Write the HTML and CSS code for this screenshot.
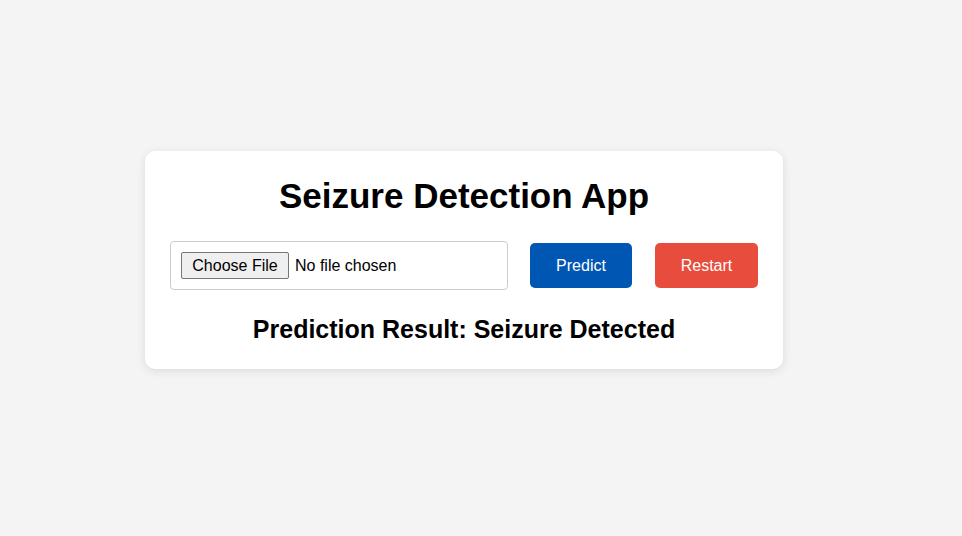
FILE: index.html
```html
<!DOCTYPE html>
<html lang="en">
<head>
<meta charset="utf-8">
<title>Seizure Detection App</title>
<link rel="stylesheet" href="styles.css">
</head>
<body>
  <main class="card">
    <h1 class="title">Seizure Detection App</h1>
    <div class="controls">
      <input class="file-input" type="file">
      <button class="btn btn-predict" type="button">Predict</button>
      <button class="btn btn-restart" type="button">Restart</button>
    </div>
    <h2 class="result">Prediction Result: Seizure Detected</h2>
  </main>
</body>
</html>
```

FILE: styles.css
```css
* {
  box-sizing: border-box;
}

html, body {
  margin: 0;
  height: 100%;
}

body {
  background: #f4f4f4;
  font-family: "Liberation Sans", Arial, sans-serif;
  color: #000;
  display: flex;
  align-items: center;
  justify-content: center;
  padding: 0 34px 16px 0;
}

.card {
  width: 638px;
  background: #fff;
  border-radius: 10px;
  box-shadow: 0 2px 10px rgba(0, 0, 0, 0.1);
  padding: 25px 25px 26px;
  text-align: center;
}

.title {
  margin: 0;
  font-size: 35px;
  font-weight: bold;
  line-height: 39px;
}

.controls {
  display: flex;
  align-items: center;
  gap: 22px;
  margin-top: 26px;
}

.file-input {
  width: 338px;
  height: 49px;
  padding: 10px;
  border: 1px solid #ccc;
  border-radius: 4px;
  font-family: "Liberation Sans", Arial, sans-serif;
  font-size: 16px;
  background: #fff;
  text-align: left;
}

.file-input::file-selector-button {
  font-family: "Liberation Sans", Arial, sans-serif;
  font-size: 16px;
  width: 108px;
  height: 27px;
  padding: 1px 6px;
  margin-right: 6px;
  border: 1px solid #767676;
  border-radius: 2px;
  background: #efefef;
  color: #000;
}

.btn {
  border: none;
  border-radius: 5px;
  color: #fff;
  font-family: "Liberation Sans", Arial, sans-serif;
  font-size: 16px;
  line-height: 19px;
  padding: 13px 0;
  height: 45px;
}

.btn-predict {
  background: #0056b3;
  width: 102px;
}

.btn-restart {
  background: #e74c3c;
  width: 103px;
  margin-left: 1px;
}

.result {
  margin: 25px 0 0;
  font-size: 25px;
  font-weight: bold;
  line-height: 28px;
}
```
